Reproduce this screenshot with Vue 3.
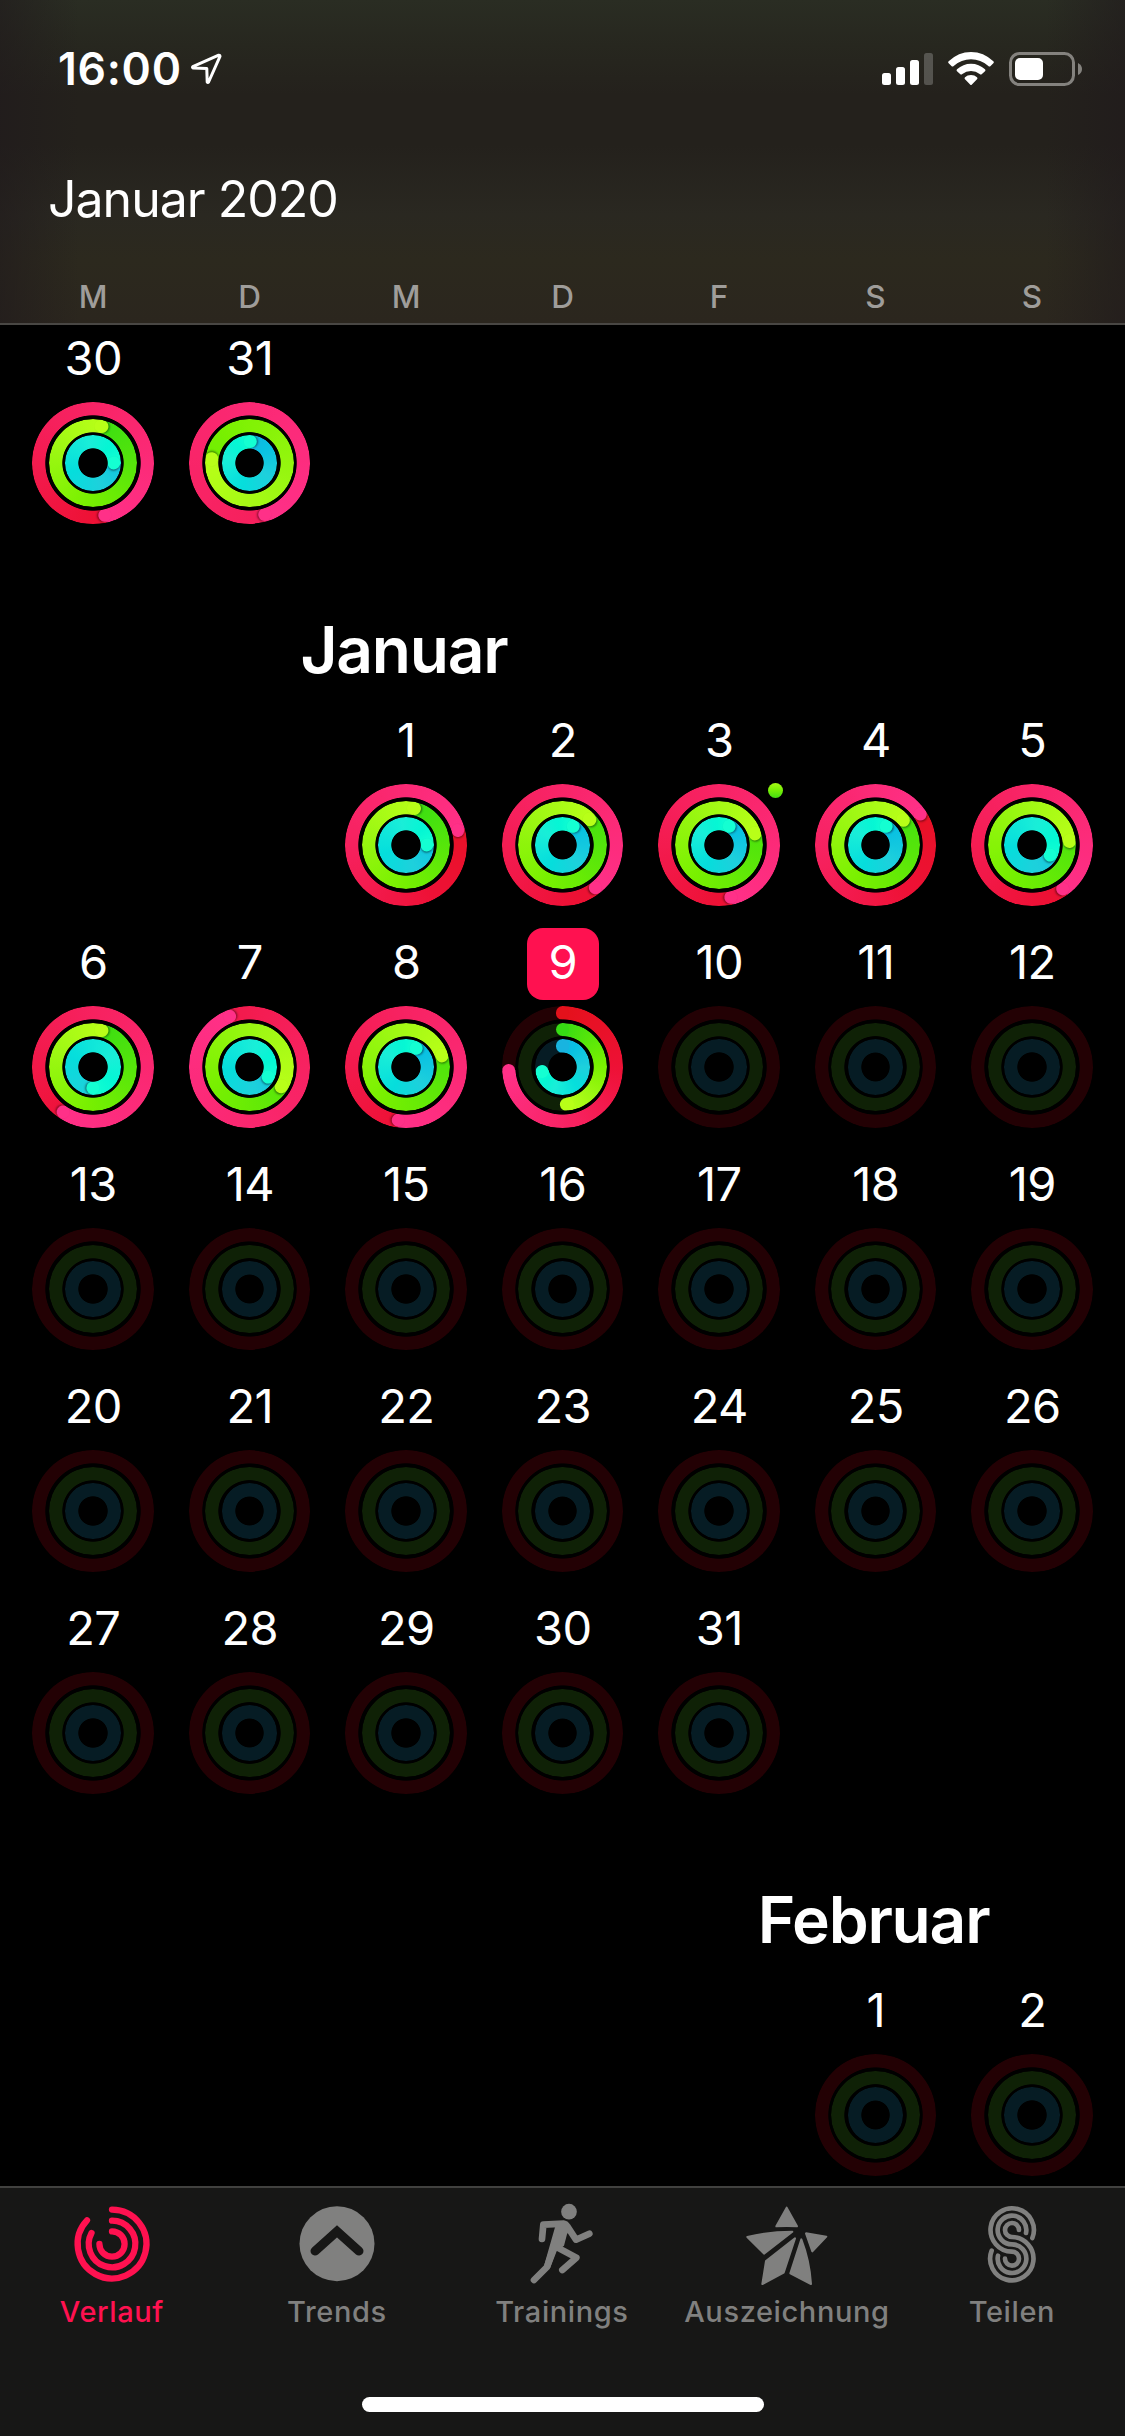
<script setup>
const weekdays = ['M', 'D', 'M', 'D', 'F', 'S', 'S']

// Each day: progress of move, exercise and stand rings (1 = full turn)
const empty = (from, to) =>
  Array.from({ length: to - from + 1 }, (_, i) => ({ n: from + i }))
const pad = (n) => Array.from({ length: n }, () => null)

const december = [
  [{ n: 30, p: [1.464, 1.036, 1.253] }, { n: 31, p: [2.455, 1.767, 1.006] }],
]

const january = [
  [
    ...pad(2),
    { n: 1, p: [1.208, 1.034, 1.253] },
    { n: 2, p: [1.397, 1.131, 1.084] },
    { n: 3, p: [1.464, 1.2, 1.084], workout: true },
    { n: 4, p: [1.155, 1.134, 1.084] },
    { n: 5, p: [1.403, 1.233, 1.333] },
  ],
  [
    { n: 6, p: [1.592, 1.036, 1.5] },
    { n: 7, p: [1.94, 1.336, 1.333] },
    { n: 8, p: [1.522, 1.2, 1.084] },
    { n: 9, p: [0.739, 0.48, 0.715], today: true },
    ...empty(10, 12),
  ],
  empty(13, 19),
  empty(20, 26),
  empty(27, 31),
]

const february = [[...pad(5), ...empty(1, 2)]]

const months = [
  { weeks: december },
  { title: 'Januar', column: 3, weeks: january },
  { title: 'Februar', column: 6, weeks: february },
]

const kinds = ['move', 'exercise', 'stand']
const palettes = {
  move: [[0, 228, 17, 27], [0.35, 238, 17, 54], [0.6, 246, 32, 92], [1, 255, 48, 136]],
  exercise: [[0, 54, 220, 20], [0.5, 120, 240, 0], [0.8, 160, 248, 20], [1, 184, 255, 24]],
  stand: [[0, 24, 180, 224], [0.12, 8, 192, 226], [0.35, 30, 208, 220], [0.55, 5, 222, 220], [0.78, 26, 238, 216], [0.9, 4, 246, 212], [1, 20, 255, 210]],
}
const tracks = { move: '#230104', exercise: '#0f2106', stand: '#061c24' }

function colorAt(kind, t) {
  const stops = palettes[kind]
  for (let i = 1; i < stops.length; i++) {
    const a = stops[i - 1]
    const b = stops[i]
    if (t <= b[0]) {
      const k = (t - a[0]) / (b[0] - a[0])
      return `rgb(${[1, 2, 3].map((c) => Math.round(a[c] + (b[c] - a[c]) * k)).join(',')})`
    }
  }
  return `rgb(${stops[stops.length - 1].slice(1).join(',')})`
}

function ringStyle(kind, p) {
  if (!p) return { background: tracks[kind] }
  const steps = 32
  const span = Math.min(p, 1)
  const first = (p - span) / p
  const list = []
  for (let i = 0; i <= steps; i++) {
    const k = i / steps
    list.push(`${colorAt(kind, first + (1 - first) * k)} ${(k * span * 360).toFixed(2)}deg`)
  }
  if (p < 1) list.push(`${tracks[kind]} ${(p * 360).toFixed(2)}deg`)
  const from = p < 1 ? 0 : (p % 1) * 360
  return { background: `conic-gradient(from ${from.toFixed(2)}deg, ${list.join(', ')})` }
}

const turn = (p) => ({ transform: `rotate(${((p % 1) * 360).toFixed(2)}deg)` })
</script>

<template>
  <div class="screen">
    <header class="header">
      <div class="status">
        <span class="time">16:00</span>
        <svg class="location" width="34" height="36" viewBox="0 0 34 36">
          <path d="M30.7 5.2 L4.8 16.6 Q4 17.6 5.2 18 L18.8 18.6 L19.2 32 Q19.8 33 20.6 32 L32 6.4 Q32 4.9 30.7 5.2 Z" fill="none" stroke="#fff" stroke-width="3" stroke-linejoin="round" />
        </svg>
        <svg class="signal" width="51" height="34" viewBox="0 0 51 34" fill="#fff">
          <rect x="0" y="21" width="9" height="12" rx="2.5" />
          <rect x="14" y="15" width="9" height="18" rx="2.5" />
          <rect x="28" y="8" width="9" height="25" rx="2.5" />
          <rect x="42" y="1" width="9" height="32" rx="2.5" opacity=".22" />
        </svg>
        <svg class="wifi" width="46" height="34" viewBox="0 0 138 102" fill="#fff">
          <path d="M2 28 Q31 0 69 0 Q107 0 136 28 Q139 31 136 34 L127 43 Q124 45 121 42 Q98 22 69 22 Q40 22 17 42 Q14 45 11 43 L2 34 Q-1 31 2 28 Z" />
          <path d="M27 52 Q45 35 69 35 Q93 35 111 52 Q114 55 111 58 L101 67 Q98 69 95 66 Q84 57 69 57 Q54 57 43 66 Q40 69 37 67 L27 58 Q24 55 27 52 Z" />
          <path d="M51 76 Q58 69 69 69 Q80 69 87 76 Q90 79 87 82 L71 98 Q69 100 67 98 L51 82 Q48 79 51 76 Z" />
        </svg>
        <svg class="battery" width="74" height="34" viewBox="0 0 74 34">
          <rect x="1.5" y="1.5" width="63" height="31" rx="9" fill="none" stroke="#84827e" stroke-width="3" />
          <rect x="6" y="6" width="28" height="22" rx="5" fill="#fff" />
          <path d="M69 11 Q73 13 73 17 Q73 21 69 23 Z" fill="#84827e" />
        </svg>
      </div>
      <h1 class="current">Januar 2020</h1>
      <div class="weekdays">
        <span v-for="(d, i) in weekdays" :key="i">{{ d }}</span>
      </div>
    </header>

    <main class="calendar">
      <section v-for="(m, mi) in months" :key="mi" class="month">
        <div v-if="m.title" class="title-row">
          <h2 class="title" :style="{ gridColumn: m.column }">{{ m.title }}</h2>
        </div>
        <div class="weeks">
          <div v-for="(w, wi) in m.weeks" :key="wi" class="week">
            <div v-for="(day, di) in w" :key="di" class="day">
              <template v-if="day">
                <span class="date" :class="{ today: day.today }">{{ day.n }}</span>
                <div class="rings">
                  <div
                    v-for="(kind, ki) in kinds"
                    :key="kind"
                    class="ring"
                    :class="kind"
                    :style="ringStyle(kind, day.p && day.p[ki])"
                  >
                    <template v-if="day.p">
                      <div v-if="day.p[ki] < 1" class="arm">
                        <i class="cap" :style="{ background: colorAt(kind, 0) }"></i>
                      </div>
                      <div class="arm" :style="turn(day.p[ki])">
                        <i class="cap" :class="{ over: day.p[ki] > 1 }" :style="{ background: colorAt(kind, 1) }"></i>
                      </div>
                    </template>
                  </div>
                  <i v-if="day.workout" class="workout"></i>
                </div>
              </template>
            </div>
          </div>
        </div>
      </section>
    </main>

    <footer class="footer">
      <nav class="tabs">
        <a class="tab active">
          <svg class="icon" viewBox="-45 -45 90 90" fill="none" stroke="currentColor" stroke-width="6.3" stroke-linecap="round">
            <path d="M0 -34.4 A34.4 34.4 0 1 1 -25 -23.6" />
            <path d="M0 -23.3 A23.3 23.3 0 1 1 -20.5 -11" />
            <path d="M0 -12.6 A12.6 12.6 0 1 1 -12.6 0" />
          </svg>
          <span>Verlauf</span>
        </a>
        <a class="tab">
          <svg class="icon" viewBox="-45 -45 90 90">
            <circle cy="-.3" r="37.5" fill="currentColor" />
            <path d="M-22 7.1 L0 -12.6 L22 7.1" fill="none" stroke="#171716" stroke-width="9" stroke-linecap="round" />
          </svg>
          <span>Trends</span>
        </a>
        <a class="tab">
          <svg class="icon" viewBox="202 86 270 270" fill="none" stroke="currentColor" stroke-width="20" stroke-linecap="round" stroke-linejoin="round">
            <circle cx="358" cy="124" r="23.5" fill="currentColor" stroke="none" />
            <path d="M277 206 L281 163 L343 160 Q349 161 353 168 L379 208 L419 190" />
            <path d="M328 234 L380 262 L338 299" />
            <path d="M310 238 L292 290 L253 329" />
            <path d="M316 171 L340 152 L361 176 L352 192 L343 226 L321 243 L301 294 L283 286 Z" fill="currentColor" stroke="none" />
          </svg>
          <span>Trainings</span>
        </a>
        <a class="tab">
          <svg class="icon" viewBox="877 86 270 270" fill="currentColor" stroke="currentColor" stroke-width="6" stroke-linejoin="round">
            <path d="M1011 112 L1042 168 Q1011 166 980 168 Z" />
            <path d="M893 200 Q958 184 1028 184 L943 250 Z" />
            <path d="M1036 204 L1002 307 L938 341 L949 272 Z" />
            <path d="M1055 207 Q1080 272 1084 341 L1022 309 Z" />
            <path d="M1069 189 L1130 199 L1088 243 Z" />
          </svg>
          <span>Auszeichnung</span>
        </a>
        <a class="tab">
          <svg class="icon" viewBox="411 86 270 270" fill="none" stroke="currentColor" stroke-width="14" stroke-linecap="round">
            <path d="M607 203 A65 65 0 1 0 546 244 A21 21 0 1 1 525 265" />
            <path d="M588 188 A43 43 0 1 0 546 222 A43 43 0 1 1 504 256" />
            <path d="M567 179 A21 21 0 1 0 546 200 A65 65 0 1 1 485 241" />
          </svg>
          <span>Teilen</span>
        </a>
      </nav>
      <div class="home"></div>
    </footer>
  </div>
</template>

<style>
body {
  background: #000;
}
</style>

<style scoped>
.screen {
  width: 1125px;
  height: 2436px;
  display: flex;
  flex-direction: column;
  overflow: hidden;
  background: #000;
  color: #fff;
  font-family: Inter, "Liberation Sans", sans-serif;
}
.header {
  flex: none;
  box-sizing: border-box;
  height: 325px;
  display: flex;
  flex-direction: column;
  border-bottom: 2px solid #494744;
  background:
    linear-gradient(90deg, rgba(32, 26, 28, 0.6), transparent 7%, transparent 93%, rgba(32, 26, 28, 0.6)),
    linear-gradient(180deg, #2a2d23 0, #27271f 45px, #24211c 95px, #24211c 145px, #2a2821 215px, #2c291e 260px, #2b261e 322px);
}
.status {
  height: 118px;
  box-sizing: border-box;
  padding: 50px 42px 0 58px;
  display: flex;
  align-items: flex-start;
}
.time {
  width: 130px;
  font-size: 44.5px;
  line-height: 38px;
  font-weight: 600;
  letter-spacing: 0.7px;
  white-space: nowrap;
}
.location {
  margin-right: auto;
}
.signal,
.wifi,
.battery {
  margin-top: 2px;
}
.wifi {
  margin: 2px 15px 0;
}
.current {
  margin: 0;
  padding-left: 48px;
  height: 142px;
  font-size: 50px;
  line-height: 162px;
  font-weight: 400;
  letter-spacing: -1px;
  white-space: nowrap;
}
.weekdays {
  display: grid;
  grid-template-columns: repeat(7, 156.5px);
  padding-left: 14.75px;
  text-align: center;
  font-size: 31.5px;
  line-height: 73px;
  height: 60px;
  font-weight: 500;
  color: #9f9d9a;
}
.calendar {
  flex: 1;
  min-height: 0;
  overflow: hidden;
  padding-left: 14.75px;
}
.month:first-child {
  margin-top: -1px;
}
.title-row,
.week {
  display: grid;
  grid-template-columns: repeat(7, 156.5px);
}
.title-row {
  height: 176px;
}
.title {
  margin: 0 3px 0 -1px;
  padding-top: 80px;
  display: flex;
  justify-content: center;
  font-size: 64px;
  line-height: 80px;
  font-weight: 600;
  letter-spacing: -1.2px;
  white-space: nowrap;
}
.weeks {
  display: flex;
  flex-direction: column;
  gap: 16px;
}
.day {
  height: 206px;
  display: flex;
  flex-direction: column;
  align-items: center;
}
.date {
  flex: none;
  width: 72px;
  height: 72px;
  font-size: 47px;
  line-height: 68.5px;
  font-weight: 400;
  letter-spacing: -0.6px;
  text-indent: 0.6px;
  text-align: center;
  border-radius: 16px;
}
.today {
  background: #ff1150;
}
.rings {
  position: relative;
  display: grid;
  place-items: center;
  width: 134px;
  height: 134px;
}
.ring {
  grid-area: 1 / 1;
  display: grid;
  border-radius: 50%;
  overflow: hidden;
  -webkit-mask: radial-gradient(closest-side, transparent calc(100% - 13.7px), #000 calc(100% - 12.9px));
  mask: radial-gradient(closest-side, transparent calc(100% - 13.7px), #000 calc(100% - 12.9px));
}
.move {
  width: 121.2px;
  height: 121.2px;
}
.exercise {
  width: 88.2px;
  height: 88.2px;
}
.stand {
  width: 55.4px;
  height: 55.4px;
}
.arm {
  grid-area: 1 / 1;
  display: flex;
  justify-content: center;
  align-items: flex-start;
}
.cap {
  width: 13.3px;
  height: 13.3px;
  border-radius: 50%;
}
.over {
  box-shadow: 1.5px 0 2px rgba(0, 0, 0, 0.4);
}
.workout {
  position: absolute;
  left: 116px;
  top: 4.5px;
  width: 15px;
  height: 15px;
  border-radius: 50%;
  background: linear-gradient(#a6fa14, #76ee06 50%, #42dd12);
}
.footer {
  flex: none;
  box-sizing: border-box;
  height: 250px;
  border-top: 2px solid #41413f;
  background: #171716;
  display: flex;
  flex-direction: column;
  align-items: center;
}
.tabs {
  width: 100%;
  height: 209px;
  display: flex;
}
.tab {
  width: 225px;
  display: flex;
  flex-direction: column;
  align-items: center;
  padding: 10.5px 1.2px 0 0;
  box-sizing: border-box;
  color: #80807f;
  font-size: 29px;
  line-height: 36px;
  font-weight: 500;
  letter-spacing: 0.6px;
}
.tab.active {
  color: #ff1150;
}
.icon {
  flex: none;
  width: 90px;
  height: 90px;
  margin-bottom: 5px;
}
.home {
  width: 402px;
  height: 15px;
  border-radius: 8px;
  background: #fff;
}
</style>
